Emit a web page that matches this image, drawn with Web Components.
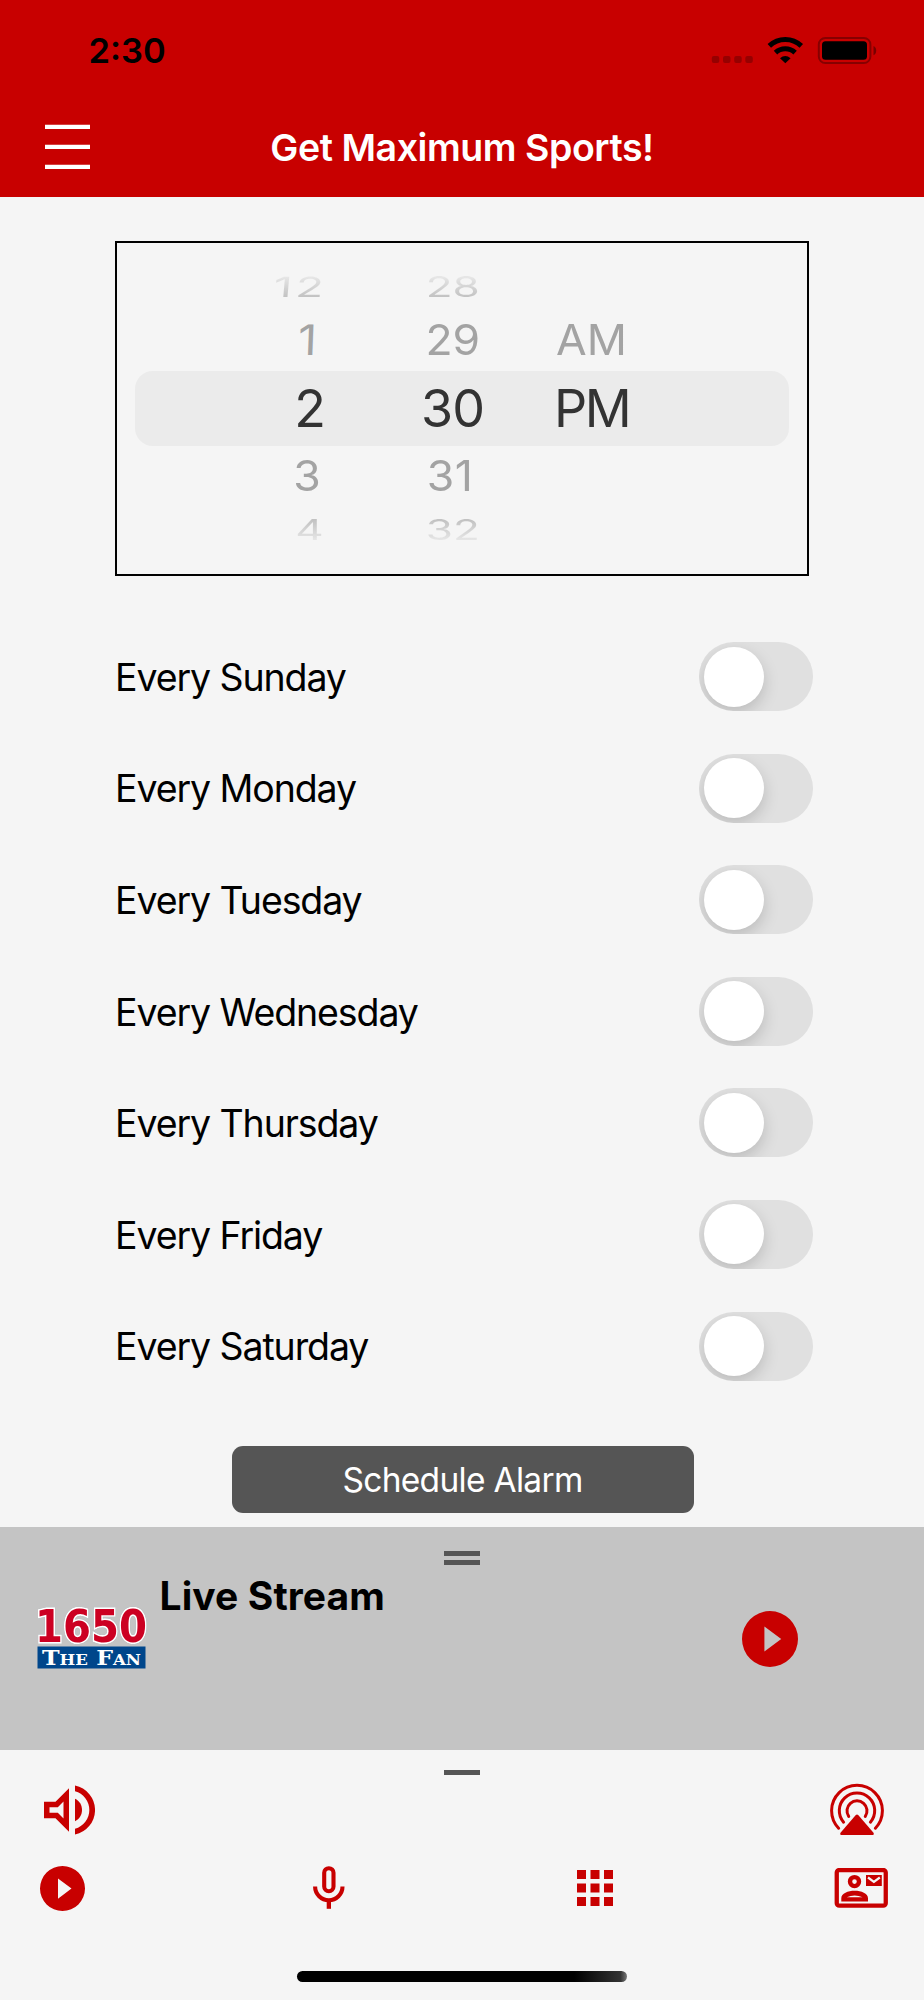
<!DOCTYPE html>
<html lang="en">
<head>
<meta charset="utf-8">
<title>Get Maximum Sports!</title>
<style>
    body {
        margin: 0;
        background: #f5f5f5;
        font-family: Inter, "Liberation Sans", sans-serif;
        color: #000;
    }
</style>
</head>
<body>
<alarm-app></alarm-app>
<script>
const RED = "#c80000";

const ICONS = {
    menu: `<svg width="45" height="46" viewBox="0 0 45 46" fill="#fff"><path d="M0 .7h45v4.300H0zM0 20.700h45v4.300H0zM0 40.700h45v4.300H0z"/></svg>`,
    play: `<svg viewBox="0 0 20 20"><path fill-rule="evenodd" d="M10 0a10 10 0 1 0 0 20a10 10 0 0 0 0-20zM8 5.500l6 4.500l-6 4.500z"/></svg>`,
    volume: `<svg width="51" height="50" viewBox="0 0 51 50">
        <path fill-rule="evenodd" d="M0 16.700h11.500L25 3.200v43.600L11.500 33.300H0zM5.500 22.200v5.600h8.300l5.700 5.700V16.500l-5.700 5.700z"/>
        <path d="M31 13.800c4.500 2 7 6.500 7 11.200s-2.500 9.200-7 11.200z"/>
        <path d="M31 .5a25 25 0 0 1 0 49v-5.700a19.500 19.500 0 0 0 0-37.600z"/></svg>`,
    airplay: `<svg width="54" height="53" viewBox="0 0 54 53">
        <g fill="none" stroke="${RED}" stroke-width="3" stroke-linecap="round">
        <path d="M8.600 45.200A25.400 25.400 0 1 1 45.400 45.200"/>
        <path d="M13.600 39.200A17.700 17.700 0 1 1 40.400 39.200"/>
        <path d="M18.700 33.400A10 10 0 1 1 35.300 33.400"/></g>
        <path d="M25.800 32q1.200-1 2.400 0L43.700 50q.7 2-1 2H11.300q-1.700 0-1-2z"/></svg>`,
    mic: `<svg width="32" height="44" viewBox="0 0 32 44">
        <rect x="11.200" y="2.200" width="9.300" height="23" rx="4.650" fill="none" stroke="${RED}" stroke-width="4.100"/>
        <path d="M2.100 20.500a13.700 13.700 0 0 0 27.400 0" fill="none" stroke="${RED}" stroke-width="4.100"/>
        <path d="M13.700 33h4.300v9.800h-4.300z"/></svg>`,
    grid: `<svg width="36" height="36" viewBox="0 0 36 36"><path d="M0 0h9v9H0zM13.500 0h9v9h-9zM27 0h9v9h-9zM0 13.500h9v9H0zM13.500 13.500h9v9h-9zM27 13.500h9v9h-9zM0 27h9v9H0zM13.500 27h9v9h-9zM27 27h9v9h-9z"/></svg>`,
    contact: `<svg width="54" height="40" viewBox="0 0 54 40">
        <rect x="2.750" y="2" width="49" height="35.700" rx="2.500" fill="none" stroke="${RED}" stroke-width="4.300"/>
        <circle cx="20.500" cy="13.600" r="4.500" fill="none" stroke="${RED}" stroke-width="4.400"/>
        <path fill-rule="evenodd" d="M7.300 33.500v-3.200c0-10 26.700-10 26.700 0v3.200zM12.700 29.300h15.900q-8-3.500-15.900 0z"/>
        <path d="M32 7h15.800v11H32z"/>
        <path d="M34 9.500l5.900 4.300l5.900-4.300" fill="none" stroke="#f5f5f5" stroke-width="2.200"/></svg>`,
    status: `<svg width="170" height="30" viewBox="710 36 170 30">
        <g fill="#960000"><rect x="711.800" y="56" width="7.500" height="7" rx="2"/><rect x="723" y="56" width="7.500" height="7" rx="2"/><rect x="734.200" y="56" width="7.500" height="7" rx="2"/><rect x="745.300" y="56" width="7.500" height="7" rx="2"/></g>
        <g fill="none" stroke="#000" stroke-width="5"><path d="M769.300 45.900A23.200 23.200 0 0 1 801.300 45.900"/><path d="M775.500 52.600A14.200 14.200 0 0 1 795.100 52.600"/></g>
        <path d="M780 58.300q5.300-4.600 10.600 0L785.300 63.200z"/>
        <rect x="818.800" y="38" width="51.600" height="25" rx="6.500" fill="none" stroke="#860000" stroke-width="2"/>
        <rect x="822" y="41.200" width="45" height="18.600" rx="3.500"/>
        <path fill="#780000" d="M873.500 46q2.700 1 2.700 4.600t-2.700 4.600z"/></svg>`,
};

class AppIcon extends HTMLElement {
    connectedCallback() {
        this.attachShadow({mode: "open"}).innerHTML = `
        <style>
            :host { display: block; line-height: 0; fill: ${RED}; }
            :host([name="status"]) { fill: #000; }
            :host([name="play"]) svg { width: var(--size, 45px); height: var(--size, 45px); }
        </style>
        ${ICONS[this.getAttribute("name")]}`;
    }
}
customElements.define("app-icon", AppIcon);

class AppHeader extends HTMLElement {
    connectedCallback() {
        this.attachShadow({mode: "open"}).innerHTML = `
        <style>
            :host {
                display: flex;
                flex-direction: column;
                height: 196.5px;
                background: ${RED};
            }
            .status {
                display: flex;
                justify-content: space-between;
                align-items: flex-start;
                height: 66px;
                padding: 36px 44px 0 88.5px;
                box-sizing: border-box;
            }
            .time {
                font-size: 34.5px;
                line-height: 30px;
                font-weight: 600;
            }
            .bar {
                display: grid;
                grid-template-columns: 90px 1fr 90px;
                align-items: center;
                height: 78px;
                margin-top: 41.5px;
            }
            .bar app-icon { padding-left: 44.5px; }
            .title {
                padding-top: 2px;
                color: #fff;
                font-size: 37.5px;
                font-weight: 600;
                line-height: 46px;
                letter-spacing: -0.45px;
                text-align: center;
            }
        </style>
        <div class="status">
            <div class="time">2:30</div>
            <app-icon name="status"></app-icon>
        </div>
        <div class="bar">
            <app-icon name="menu"></app-icon>
            <div class="title"><slot></slot></div>
        </div>`;
    }
}
customElements.define("app-header", AppHeader);

class TimePicker extends HTMLElement {
    column(name, values) {
        return `<div class="col ${name}">` + values.map((v, i) =>
            `<div class="row r${i}"><span>${v}</span></div>`).join("") + `</div>`;
    }

    connectedCallback() {
        this.attachShadow({mode: "open"}).innerHTML = `
        <style>
            :host {
                display: grid;
                grid-template-columns: 190px 185px 1fr;
                height: 335px;
                padding: 21px 18px 0;
                box-sizing: border-box;
                border: 2.5px solid #000;
            }
            .col { display: flex; flex-direction: column; }
            .row {
                display: flex;
                align-items: center;
                box-sizing: border-box;
                height: 60.5px;
                font-size: 42px;
                line-height: 60px;
                color: #a3a3a3;
            }
            .row span { display: block; }
            .r1 span, .r3 span { transform: scaleX(1.06); }
            /* the outermost rows turn away with the wheel */
            .r0, .r4 {
                height: 46px;
                color: transparent;
            }
            .r0 span, .r4 span {
                transform: scale(1.05, .66);
                background: linear-gradient(#e6e6e6 25%, #c2c2c2 75%);
                -webkit-background-clip: text;
                background-clip: text;
            }
            .r4 span { background-image: linear-gradient(#c2c2c2 25%, #e6e6e6 75%); }
            .r2 {
                height: 75.5px;
                font-size: 52px;
                line-height: 75.5px;
                padding-top: 1px;
                color: #333;
                background: #ebebeb;
            }
            .hour .row { justify-content: flex-end; }
            .hour .r2 { border-radius: 18px 0 0 18px; }
            .hour .r2 span { transform: translateX(1px); }
            .hour .r0 { letter-spacing: 3px; }
            .hour .r0 span { transform: scale(1.1, .66) skewX(-3deg); }
            .hour .r1 { padding-right: 9px; }
            .hour .r1 span { transform: scaleX(1.1) skewX(-2deg); }
            .hour .r3 { padding-right: 5.5px; }
            .hour .r4 { padding-right: 1.5px; }
            .minute .row { justify-content: center; padding-left: 70px; }
            .minute .r2 { letter-spacing: -1px; }
            .minute .r3 { padding-left: 66px; letter-spacing: .5px; }
            .half .row { padding-left: 44px; }
            .half .r1 { padding-left: 48px; }
            .half .r2 { border-radius: 0 18px 18px 0; letter-spacing: -2.5px; }
        </style>
        ${this.column("hour", ["12", "1", "2", "3", "4"])}
        ${this.column("minute", ["28", "29", "30", "31", "32"])}
        ${this.column("half", ["", "AM", "PM", "", ""])}`;
    }
}
customElements.define("time-picker", TimePicker);

class DayToggle extends HTMLElement {
    connectedCallback() {
        this.attachShadow({mode: "open"}).innerHTML = `
        <style>
            :host {
                display: flex;
                justify-content: space-between;
                align-items: center;
                height: 69px;
                font-size: 37.5px;
                letter-spacing: -1.1px;
            }
            .label { padding-top: 1.5px; }
            .track {
                width: 114px;
                height: 69px;
                padding: 4.5px;
                box-sizing: border-box;
                border-radius: 35px;
                background: #e0e0e0;
                overflow: hidden;
            }
            .knob {
                width: 60px;
                height: 60px;
                border-radius: 50%;
                background: #fff;
                box-shadow: 0 6px 16px rgba(0,0,0,.17);
            }
        </style>
        <div class="label"><slot></slot></div>
        <div class="track"><div class="knob"></div></div>`;
    }
}
customElements.define("day-toggle", DayToggle);

class StationLogo extends HTMLElement {
    connectedCallback() {
        this.attachShadow({mode: "open"}).innerHTML = `
        <style>
            :host { display: block; line-height: 0; }
            svg { overflow: visible; }
            text { font-family: "DejaVu Serif", serif; font-weight: 700; }
            .number {
                font-family: "DejaVu Sans", sans-serif;
                font-size: 44px;
                fill: #cc0022;
                stroke: #fff;
                stroke-width: 3.4px;
                paint-order: stroke;
                filter: drop-shadow(0 0 .7px #60747f);
            }
            .band { font-size: 20px; font-variant: small-caps; fill: #fff; }
        </style>
        <svg width="112" height="64" viewBox="0 0 112 64">
            <text class="number" x="-1" y="36" textLength="112" lengthAdjust="spacingAndGlyphs">1650</text>
            <rect x="1.500" y="40.500" width="108" height="22" fill="#00468b"/>
            <text class="band" x="6" y="58.500" textLength="99" lengthAdjust="spacingAndGlyphs">The Fan</text>
        </svg>`;
    }
}
customElements.define("station-logo", StationLogo);

class PlayerBar extends HTMLElement {
    connectedCallback() {
        this.attachShadow({mode: "open"}).innerHTML = `
        <style>
            :host {
                display: block;
                height: 223px;
                padding-top: 24px;
                box-sizing: border-box;
                background: #c4c4c4;
            }
            .handle {
                width: 36px;
                height: 4px;
                margin-left: 444px;
                border: solid #555;
                border-width: 5px 0;
            }
            .content {
                display: grid;
                grid-template-columns: 123.5px 1fr 182px;
                padding-left: 36px;
            }
            station-logo { margin-top: 41px; }
            .name {
                margin-top: 7px;
                font-size: 39px;
                line-height: 48px;
                font-weight: 700;
                letter-spacing: 0.1px;
            }
            app-icon { --size: 56px; margin-top: 45.5px; }
        </style>
        <div class="handle"></div>
        <div class="content">
            <station-logo></station-logo>
            <div class="name"><slot></slot></div>
            <app-icon name="play"></app-icon>
        </div>`;
    }
}
customElements.define("player-bar", PlayerBar);

class BottomBar extends HTMLElement {
    connectedCallback() {
        this.attachShadow({mode: "open"}).innerHTML = `
        <style>
            :host { display: block; padding-top: 20px; height: 250px; box-sizing: border-box; }
            .handle { width: 36px; height: 4.5px; margin-left: 444px; background: #555; }
            .top {
                display: flex;
                justify-content: space-between;
                align-items: center;
                padding: 0 40px 0 43.5px;
                height: 53px;
                margin-top: 8.5px;
            }
            .tabs {
                display: grid;
                grid-template-columns: 273px 264px 257px auto;
                align-items: center;
                padding-left: 40px;
                height: 45px;
                margin-top: 29.5px;
            }
            .home {
                width: 330px;
                height: 11px;
                margin: 60px auto 0;
                border-radius: 6px;
                background: linear-gradient(90deg, #000 84%, #333 98%, #777);
            }
        </style>
        <div class="handle"></div>
        <div class="top">
            <app-icon name="volume"></app-icon>
            <app-icon name="airplay"></app-icon>
        </div>
        <div class="tabs">
            <app-icon name="play"></app-icon>
            <app-icon name="mic"></app-icon>
            <app-icon name="grid"></app-icon>
            <app-icon name="contact"></app-icon>
        </div>
        <div class="home"></div>`;
    }
}
customElements.define("bottom-bar", BottomBar);

class AlarmApp extends HTMLElement {
    connectedCallback() {
        const days = ["Sunday", "Monday", "Tuesday", "Wednesday", "Thursday", "Friday", "Saturday"];
        this.attachShadow({mode: "open"}).innerHTML = `
        <style>
            :host {
                display: flex;
                flex-direction: column;
                width: 924px;
                height: 2000px;
                overflow: hidden;
            }
            main {
                height: 1330.5px;
                padding: 44.5px 111px 0 115px;
                box-sizing: border-box;
            }
            time-picker { width: 694px; }
            .days {
                display: flex;
                flex-direction: column;
                gap: 42.6px;
                margin-top: 66px;
            }
            button {
                display: block;
                width: 462px;
                height: 67px;
                margin: 65.5px 0 0 116.5px;
                padding: 0;
                border: 0;
                border-radius: 11px;
                background: #555;
                color: #fff;
                font: 33.5px Inter, sans-serif;
                letter-spacing: -0.7px;
            }
        </style>
        <app-header>Get Maximum Sports!</app-header>
        <main>
            <time-picker></time-picker>
            <div class="days">
                ${days.map(day => `<day-toggle>Every ${day}</day-toggle>`).join("")}
            </div>
            <button>Schedule Alarm</button>
        </main>
        <player-bar>Live Stream</player-bar>
        <bottom-bar></bottom-bar>`;
    }
}
customElements.define("alarm-app", AlarmApp);
</script>
</body>
</html>
